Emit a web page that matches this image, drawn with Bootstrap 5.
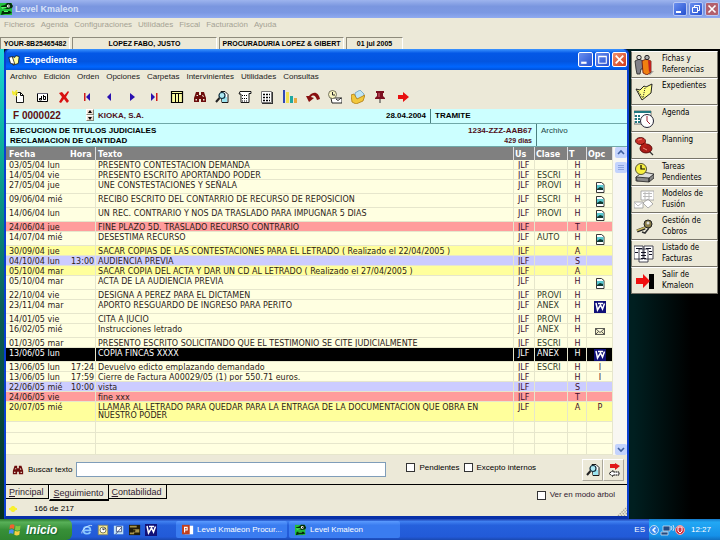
<!DOCTYPE html>
<html lang="es">
<head>
<meta charset="utf-8">
<meta name="viewport" content="width=device-width, initial-scale=1">
<title>Level Kmaleon</title>
<link href="https://cdn.jsdelivr.net/npm/bootstrap@5.3.0/dist/css/bootstrap.min.css" rel="stylesheet">
<style>
body{font:8px/10px "Liberation Sans",Arial,sans-serif;color:#000;background:#000;overflow:hidden}
button,input{font:inherit;color:inherit;padding:0;border:0;background:none}
a{color:inherit;text-decoration:none}
svg{display:block;flex:none}
.i14{width:14px;height:14px}.i12{width:12px;height:12px}.i20{width:20px;height:20px}
.face{background:#ece9d8}
.titlebar{font-size:9px;font-weight:700;line-height:12px}
.outer-title{height:18px;background:linear-gradient(#9db4ee,#7a96df 35%,#7b98e3 70%,#90abf0);color:#d8e2f8;padding:0 1px 0 0;gap:1px}
.winbtns{gap:2px}
.winbtns button{width:14px;height:14px;border:1px solid #b9c8f4;border-radius:2px;background:linear-gradient(135deg,#6a8ff0,#2450cf)}
.winbtns button svg{width:12px;height:12px}
.winbtns .x-out{background:#b3606c}
.winbtns .x-in{background:linear-gradient(135deg,#f09070,#d03a18);border-color:#fff}
.inner-title .winbtns button{border-color:#fff;height:15px;width:15px}
.inner-title .winbtns button svg{width:13px;height:13px}
.outer-menu{height:19px;gap:6px;padding:2px 4px;color:#a5a294}
.fields{height:12px;gap:2px}
.fields div{border:1px solid #8e8b7c;border-right-color:#fff;border-bottom:0;font-size:7px;font-weight:700;line-height:11px;text-align:center;white-space:nowrap;overflow:hidden}
.f1{width:70px}.f2{width:145px}.f3{width:125px}.f4{width:57px}
.desk{background:linear-gradient(90deg,#001f20 88%,#000 96%)}
.strip{flex:none;width:4px;background:linear-gradient(#1fd8d8,#0bb09c 20%,#0a6058 55%,#05301c)}
.win{border:solid #0a3fd0;border-width:0 2px 3px;border-bottom-color:#0830a8;border-radius:5px 5px 0 0;background:#0a3fd0;min-width:0}
.inner-title{height:21px;color:#fff;background:linear-gradient(#3d95ff,#0458e6 20%,#0355e0 60%,#0066ff 85%,#0050d8);border-radius:5px 5px 0 0;padding:0 0 0 2px}
.inner-menu{gap:7px;padding:2px 4px 0;height:14px;color:#222}
.tools{width:410px;height:25px;padding:0 6px}
.cyan{background:#ccffff}
.info1{height:15px;font-weight:700;line-height:14px;border-bottom:1px solid #70a8a8}
.info2{height:23px;font-weight:700;line-height:10px;border-bottom:1px solid #70a8a8}
.info2 > div{padding-top:2px}
.code{width:80px;font-size:10px;color:#601010;padding-left:7px}
.spin{width:8px;height:12px}
.spin button{height:6px;border:1px solid;border-color:#fff #887 #887 #fff;background:#ece0d4;width:8px}
.spin svg{width:6px;height:4px}
.trm{width:197px;border-left:1px solid #4a8080;padding-left:4px}
.arc{width:91px;flex:none;border-left:1px solid #4a8080;padding-left:4px;font-weight:400;color:#244}
.maroon{color:#501020}
.small7{font-size:7px}
.gridbox{background:#ffffe1}
.log{table-layout:fixed;width:100%;border-collapse:separate;border-spacing:0;font:8px/10px "DejaVu Sans",Verdana,sans-serif;color:#2c1c18}
.log th{height:13px;background:#808080;color:#fff;font-weight:700;padding:1px 1px 0;line-height:11px;border-right:1px solid #dcdcdc;overflow:hidden}
.log th:first-child,.log td:first-child{border-right:0;padding-left:3px}
.log td{height:10px;padding:2px 1px 0 2px;line-height:7px;border:solid #e6e6cc;border-width:0 1px 1px 0;vertical-align:top;white-space:nowrap;overflow:hidden}
.log th:nth-child(3),.log td:nth-child(3){padding-left:2px}
.log td:nth-child(n+4){color:#401030}
.log td:nth-child(5){color:#303a28}
.log td:nth-child(4){padding-left:4px}
.log td:nth-child(6){text-align:center}
.log td:nth-child(7){text-align:center}
.log td svg{margin:-1px auto 0}
.log .tall td{height:14px}
.log .dbl td{height:20px;line-height:8px}
.log .blank td{height:11px}
.log .pink td{background:#ff9c9c}
.log .yel td{background:#ffff9c}
.log .lil td{background:#ccccff}
.log .sel td{background:#000;color:#fff}
.sbar{width:14px;background:#f8f7f2}
.sbar button{width:12px;height:11px;margin-left:2px;background:#c3d3fd;border-radius:2px}
.sbar svg{width:12px;height:11px}
.find{height:30px;padding:0 3px 0 6px;border-bottom:1px solid #000}
.find .field{height:15px;width:310px;background:#fff;border:1px solid #7f9db9;border-radius:0}
.box{appearance:none;width:9px;height:9px;background:#fff;border:1px solid #333;margin:0}
.sq{width:21px;height:22px;border:1px solid;border-color:#fff #aaa79a #aaa79a #fff}
.tabs{font-size:9px;line-height:12px;color:#302030}
.tabs button{border:solid #000;border-width:0 1px 1px 0;padding:0 4px 0 3px;height:14px}
.tabs .on{height:16px;border-bottom-width:2px;border-left:1px solid #fff;padding:1px 4px 0}
.tabs button::first-letter{text-decoration:underline}
.tree{font-size:8px}
.stat{height:15px;padding-left:2px}
.side{flex:none;width:91px;padding:2px 2px 0 2px}
.side a{height:27px;border:1px solid #77746a;border-top-color:#fff;padding:1px 0 0 2px;gap:8px;font:8px/11px "DejaVu Sans Condensed","DejaVu Sans",sans-serif}
.side svg{margin-top:2px}
.task{height:21px;background:linear-gradient(#1c3fae,#3f80f0 12%,#2560dc 30%,#225ad8 85%,#1a48b0);color:#fff}
.start{width:72px;background:linear-gradient(#2a7a2a,#58b058 15%,#389038 50%,#2f8530);border-radius:0 6px 6px 0;font:italic 700 12px/18px "Liberation Sans",Arial,sans-serif;gap:4px;padding-left:8px;color:#fff;text-shadow:1px 1px 1px #163}
.quick{width:104px;padding-left:9px;gap:4px}
.tk{width:111px;height:17px;background:linear-gradient(#5b9bff,#3a7cf0 25%,#3a7cf0);border-radius:2px;padding-left:6px;gap:3px;white-space:nowrap}
.tk + .tk{margin-left:2px}
.tray{background:linear-gradient(#1578c8,#22a8f4 15%,#1590e8 80%,#1170c0);width:71px;padding-right:9px}
</style>
<script src="https://cdn.jsdelivr.net/npm/bootstrap@5.3.0/dist/js/bootstrap.bundle.min.js"></script>
</head>
<body class="d-flex flex-column vh-100">
<svg width="0" height="0" class="position-absolute" aria-hidden="true">
<symbol id="kam" viewBox="0 0 14 14"><path fill="#22c03c" d="M0 1h12v12H0z"/><path fill="#062c0a" d="M1 4l4-1 2-2h4l2 3-1 2-4 1-6 0zM2 9h8l2 2-3 1H5l-4 1z"/><path fill="#55ff66" d="M1 5h5l1 1-5 1zM4 9h4v1H4z"/><circle cx="8.500" cy="4" r="1.600" fill="#fff"/><circle cx="9" cy="4" r=".7"/></symbol>
<symbol id="min" viewBox="0 0 12 12"><path fill="#fff" d="M2 8h5v2H2z"/></symbol>
<symbol id="max" viewBox="0 0 12 12"><path fill="none" stroke="#fff" d="M2.500 3.500h7v6h-7zM2 3h8"/></symbol>
<symbol id="res" viewBox="0 0 12 12"><path fill="none" stroke="#fff" d="M4.500 4V2.500h5v5H8M2.500 4.500h5v5h-5z"/></symbol>
<symbol id="cls" viewBox="0 0 12 12"><path stroke="#fff" stroke-width="1.600" d="M2.500 2.500l7 7M9.500 2.500l-7 7"/></symbol>
<symbol id="up" viewBox="0 0 12 11"><path fill="none" stroke="#3f5f9f" stroke-width="1.600" d="M3 7l3-3 3 3"/></symbol>
<symbol id="dn" viewBox="0 0 12 11"><path fill="none" stroke="#3f5f9f" stroke-width="1.600" d="M3 4l3 3 3-3"/></symbol>
<symbol id="card" viewBox="0 0 14 14"><path fill="#ffff9c" stroke="#000" stroke-width=".8" d="M5 3l3 1 1-2 4 1-1 8-6 2z"/><path fill="#fff" stroke="#000" stroke-width=".8" d="M1 4l4-1 3 9-5-1z"/></symbol>
<symbol id="new" viewBox="0 0 14 14"><path fill="#fff" stroke="#000" stroke-width=".9" d="M4.500 2.500h4l3 3v7h-7z"/><path fill="none" stroke="#000" d="M8.500 2.500v3h3"/><path stroke="#f4ec30" stroke-width="1.500" d="M0 1l5 5M5 0L1 5M0 3h6"/></symbol>
<symbol id="edt" viewBox="0 0 14 14"><path fill="#fff" stroke="#000" d="M2.500 3.500h10v8h-10z"/><path fill="#667" d="M2 3h11v1H2z"/><path fill="none" stroke="#000" d="M6.500 6v4H4.500V8.500h2M8.500 5v4.500h2v-3h-2"/></symbol>
<symbol id="del" viewBox="0 0 14 14"><path fill="#d81010" d="M2 3l3-1 2.500 3L11 1l1 1-3 5 3 4-2 2-3-4-3 4-2-1 3-5z"/></symbol>
<symbol id="fst" viewBox="0 0 14 14"><path fill="#d01818" d="M4 3h1.500v8H4z"/><path fill="#2a10b0" d="M10 3v8L6 7z"/></symbol>
<symbol id="prv" viewBox="0 0 14 14"><path fill="#2a10b0" d="M9 3v8L5 7z"/></symbol>
<symbol id="nxt" viewBox="0 0 14 14"><path fill="#2a10b0" d="M5 3v8l5-4z"/></symbol>
<symbol id="lst" viewBox="0 0 14 14"><path fill="#2a10b0" d="M4 3v8l4-4z"/><path fill="#d01818" d="M9 3h1.500v8H9z"/></symbol>
<symbol id="col" viewBox="0 0 14 14"><path fill="#f8f8a0" stroke="#000" stroke-width="1.200" d="M1.500 1.500h11v11h-11z"/><path stroke="#000" d="M2 3.500h10M5.500 3v9M8.500 3v9"/></symbol>
<symbol id="bin" viewBox="0 0 14 14"><path fill="#6c0c0c" d="M3 2h3v3h2V2h3l2 6v4H8V9H6v3H1V8z"/><path fill="#ece9d8" d="M4 5h1v1H3zM9 5h1l1 2h-1zM2.500 9H4v1.500H2.500zM10 9h1.500v1.500H10z"/></symbol>
<symbol id="mag" viewBox="0 0 14 14"><path fill="#fff" stroke="#000" stroke-width=".9" d="M6 1.500h4l3 3v8H7z"/><path fill="#9be4f0" d="M7 7h5v5H7z"/><circle cx="7" cy="5.500" r="3" fill="#aeeaf4" stroke="#103040" stroke-width="1.200"/><path stroke="#222" stroke-width="2" d="M4.500 8L1 12"/></symbol>
<symbol id="scr" viewBox="0 0 14 14"><path fill="#fff" stroke="#000" stroke-width=".9" d="M2 1.500h11v2h-2v9H3V4H1z"/><path stroke="#000" stroke-dasharray="1 1" d="M4 5.500h6M4 8.500h6M4 11h5"/></symbol>
<symbol id="cal" viewBox="0 0 14 14"><path fill="#fff" stroke="#777" d="M1.500 1.500h10v11h-10z"/><path fill="#333" d="M12 2h1v12H2v-1h10z"/><path stroke="#000" stroke-width="1.500" stroke-dasharray="2 1" d="M3 4.500h7M3 7.500h7M3 10.500h7"/></symbol>
<symbol id="bar" viewBox="0 0 14 14"><path fill="#3048b8" d="M0 0h2v13H0z"/><path fill="#f0e050" d="M3 2h3v11H3z"/><path fill="#20a8a0" d="M7 6h3v7H7z"/><path fill="#e8a840" d="M11 8h3v5h-3z"/></symbol>
<symbol id="und" viewBox="0 0 14 14"><path fill="#881010" d="M0 6l3 6 5-4-3-1c2-3 5-1 6 3l3-1C13 3 8 0 3 6z"/></symbol>
<symbol id="clk" viewBox="0 0 14 14"><path fill="#fff" stroke="#111" stroke-width=".9" d="M3 8h11v5H4z"/><circle cx="4.500" cy="4.500" r="4" fill="#f8f4c0" stroke="#554" stroke-width=".8"/><path fill="none" stroke="#222" d="M4.500 2v3h2.500M8 9l2 1.500L13 8"/></symbol>
<symbol id="fol" viewBox="0 0 14 14"><path fill="#bfe4f4" stroke="#6aa0c0" stroke-width=".8" d="M4 3l5-3 4 4-2 6-6-1z"/><path fill="#f2c83c" stroke="#b07c10" stroke-width=".8" d="M0 5l3-1 3 5 8-4-2 6-7 3-4-2z"/></symbol>
<symbol id="pin" viewBox="0 0 14 14"><path fill="#7c1020" d="M3 1h8v2h-1v3l2 2v1H2V8l2-2V3H3z"/><path fill="#333" d="M6.500 9h1v4h-1z"/><path fill="#d86878" d="M5.500 3h1v4h-1z"/></symbol>
<symbol id="arr" viewBox="0 0 14 14"><path fill="#e81010" d="M2 5h5V2l6 5-6 5V9H2z"/></symbol>
<symbol id="img" viewBox="0 0 12 12"><path fill="#fff" stroke="#222" stroke-width=".9" d="M2.500 1.500h5l2.500 2v8H2.500z"/><path fill="#58c8d0" d="M3 4h6.500v5H3z"/><path fill="#103830" d="M3 8l3-2 3 1v2H3z"/></symbol>
<symbol id="wrd" viewBox="0 0 12 12"><path fill="#101078" d="M0 0h12v12H0z"/><path fill="none" stroke="#fff" stroke-width="1.500" d="M2 2l1.500 7 3-5 2 4 2-5.500M4 2.500h5"/></symbol>
<symbol id="env" viewBox="0 0 12 12"><path fill="#f0edc8" stroke="#333" stroke-width=".8" d="M1.500 3.500h9v6h-9zM1.500 3.500l4.500 4 4.500-4M1.500 9.500l3-3M10.500 9.500l-3-3"/></symbol>
<symbol id="swp" viewBox="0 0 14 14"><path fill="#e01818" d="M3 1h5V0l5 3-5 4V5H3z"/><path fill="#fff" stroke="#000" stroke-dasharray="1.500 .5" d="M12 9H6V7.500L2 10.500l4 3V12h6z"/></symbol>
<symbol id="ppl" viewBox="0 0 20 20"><path fill="#999" d="M12 17l8-1-4 4z"/><path fill="#808088" stroke="#222" stroke-width=".8" d="M1 6l4-2 4 2v8H7l-1 5H3l-1-5z"/><path fill="#f08010" stroke="#611" stroke-width=".8" d="M8 6l4-2 5 2v11l-4 3-4-2z"/><path fill="#c02020" d="M14 5l3 2v9l-2 1z"/><circle cx="5" cy="2.500" r="2.200" fill="#ddd" stroke="#222"/><circle cx="13" cy="2.500" r="2.200" fill="#aaa" stroke="#222"/></symbol>
<symbol id="exp" viewBox="0 0 20 20"><path fill="#ffff88" stroke="#222" d="M2 7l4 1 4-4 2 1 6-3-1 9-9 7z"/><path fill="none" stroke="#222" stroke-dasharray="1 1" d="M4 9l5 7M6 8l3-3M11 6l-2 10"/></symbol>
<symbol id="agd" viewBox="0 0 20 20"><path fill="#fff" stroke="#555" stroke-width=".8" d="M0 2h17v13H0z"/><path fill="#207880" d="M0 2h17v2H0zM1 6h5v8H1z"/><path stroke="#fff" d="M0 8.500h8M0 11.500h8M3.500 5v9"/><circle cx="13" cy="12" r="6.500" fill="#fff" stroke="#223"/><path fill="none" stroke="#a02030" d="M13 7v5l3 3"/></symbol>
<symbol id="pnl" viewBox="0 0 20 20"><path stroke="#333" stroke-width="1.300" d="M13 13l6 6"/><ellipse cx="12" cy="12.500" rx="6" ry="4.500" fill="#a81c18" stroke="#400" stroke-width=".8"/><path fill="#b82018" d="M6 6l5-1 2 5-5 3z"/><ellipse cx="6.500" cy="5" rx="5" ry="3.500" fill="#c83028" stroke="#400" stroke-width=".8"/><path fill="none" stroke="#f08878" d="M4 4l4-1M9 12l4 2"/></symbol>
<symbol id="tsk" viewBox="0 0 20 20"><path fill="#ddd" stroke="#222" stroke-width=".8" d="M2 14l7-5 11 2-5 6-13 1z"/><path fill="#888" stroke="#222" stroke-width=".8" d="M2 14l13 1v4L3 18zM15 15l5-4v4l-5 4z"/><circle cx="7" cy="6" r="5.500" fill="#f8f040" stroke="#553"/><path fill="none" stroke="#000" stroke-width="1.200" d="M7 2v4h4"/></symbol>
<symbol id="mod" viewBox="0 0 20 20"><path fill="#fff" stroke="#999" stroke-width=".8" d="M7 1h13v9H7zM0 12h9v6H0zM9 13l5-4 5 5-5 4z"/><path fill="none" stroke="#bbb" d="M9 3.500h9M9 6.500h9M0 12l4 4 5-4M11 2v8M15 2v8"/></symbol>
<symbol id="cob" viewBox="0 0 20 20"><circle cx="14" cy="7" r="4" fill="#887c48" stroke="#222"/><circle cx="14" cy="6" r="1.500" fill="#ddd"/><path fill="none" stroke="#333" stroke-width="1.500" d="M15 11l-4 5-3-1"/><path stroke="#222" stroke-width="3" d="M3 14l8-3"/><path stroke="#c8b860" stroke-width="1.500" d="M3 13.500l8-3"/></symbol>
<symbol id="lis" viewBox="0 0 20 20"><path fill="#fff" stroke="#334" stroke-width=".9" d="M10 2h9v13h-9zM0 2h9v13H0zM5 5h9v13H5z"/><path stroke="#112" d="M7 8.500h5M7 11.500h5M7 14.500h5M2 4.500h6M12 4.500h5M15 7.500h3M15 10.500h3M1 8.500h3"/></symbol>
<symbol id="sal" viewBox="0 0 20 20"><path fill="#000" d="M15 3h5v15h-5z"/><path fill="#f01010" d="M2 7h7V3l7 7-7 7v-4H2z"/></symbol>
<symbol id="win" viewBox="0 0 14 14"><path fill="#f06030" d="M2 2c2-1 3-1 4.500 0L6 6c-2-1-3-1-4.500 0z"/><path fill="#80c840" d="M7.500 2.500c2 1 3 1 5 0L12 7c-2 1-3 1-5 0z"/><path fill="#4890f0" d="M1.300 7c2-1 3-1 4.500 0l-.5 4c-2-1-3-1-4.500 0z"/><path fill="#f8d040" d="M6.800 7.800c2 1 3 1 5 0l-.5 4c-2 1-3 1-5 0z"/></symbol>
<symbol id="ie" viewBox="0 0 14 14"><path fill="none" stroke="#8cc8ff" stroke-width="2" d="M3 7.500h8C11 2 3 2 3 7.500c0 5 6 4.500 8 2"/><path fill="none" stroke="#cfe4ff" d="M1 11C0 7 9 0 13 2"/></symbol>
<symbol id="out" viewBox="0 0 14 14"><path fill="#f4e890" stroke="#886" d="M1.500 1.500h11v11h-11z"/><circle cx="7" cy="7" r="3.500" fill="#fff" stroke="#664"/><path fill="none" stroke="#222" d="M7 4.500V7l3-2"/></symbol>
<symbol id="dsk" viewBox="0 0 14 14"><path fill="#bfe0f8" d="M1 2h11v10H1z"/><path fill="#fff" stroke="#347" stroke-width=".9" d="M4 3h6v6H4z"/><path stroke="#347" d="M3 12l7-8"/></symbol>
<symbol id="brn" viewBox="0 0 14 14"><path fill="#221c08" d="M0 1h13v12H0z"/><path fill="#a8944c" d="M1 2h8v2H1zM5 6h7v4H5zM1 10h5v2H1z"/><circle cx="6" cy="8" r="1.500" fill="#32280c"/></symbol>
<symbol id="ppt" viewBox="0 0 14 14"><path fill="#fff" d="M3 2h10v10H3z"/><path fill="#c04020" d="M0 1h9v11H0z"/><path fill="none" stroke="#fff" stroke-width="1.300" d="M3 10V4h3v3H3"/></symbol>
</svg>

<header>
<div class="outer-title titlebar d-flex align-items-center">
<svg class="i14"><use href="#kam"/></svg><span class="flex-grow-1">Level Kmaleon</span>
<div class="winbtns d-flex"><button aria-label="Minimizar"><svg><use href="#min"/></svg></button><button aria-label="Restaurar"><svg><use href="#res"/></svg></button><button class="x-out" aria-label="Cerrar"><svg><use href="#cls"/></svg></button></div>
</div>
<nav class="face outer-menu d-flex"><a href="#">Ficheros</a><a href="#">Agenda</a><a href="#">Configuraciones</a><a href="#">Utilidades</a><a href="#">Fiscal</a><a href="#">Facturación</a><a href="#">Ayuda</a></nav>
<div class="face fields d-flex"><div class="f1">YOUR-8B25465482</div><div class="f2">LOPEZ FABO, JUSTO</div><div class="f3">PROCURADURIA LOPEZ &amp; GIBERT</div><div class="f4">01 jul 2005</div></div>
</header>

<main class="desk d-flex flex-grow-1">
<div class="strip"></div>
<section class="win d-flex flex-column flex-grow-1 mb-0">
<div class="inner-title titlebar d-flex align-items-center"><svg class="i12"><use href="#card"/></svg><span class="flex-grow-1 ps-1">Expedientes</span>
<div class="winbtns d-flex"><button aria-label="Minimizar"><svg><use href="#min"/></svg></button><button aria-label="Maximizar"><svg><use href="#max"/></svg></button><button class="x-in" aria-label="Cerrar"><svg><use href="#cls"/></svg></button></div></div>
<nav class="face inner-menu d-flex"><a href="#">Archivo</a><a href="#">Edición</a><a href="#">Orden</a><a href="#">Opciones</a><a href="#">Carpetas</a><a href="#">Intervinientes</a><a href="#">Utilidades</a><a href="#">Consultas</a></nav>
<div class="face">
<div class="tools d-flex justify-content-between align-items-center">
<button aria-label="Nuevo"><svg class="i14"><use href="#new"/></svg></button><button aria-label="Editar"><svg class="i14"><use href="#edt"/></svg></button><button aria-label="Borrar"><svg class="i14"><use href="#del"/></svg></button><button aria-label="Primero"><svg class="i14"><use href="#fst"/></svg></button><button aria-label="Anterior"><svg class="i14"><use href="#prv"/></svg></button><button aria-label="Siguiente"><svg class="i14"><use href="#nxt"/></svg></button><button aria-label="Último"><svg class="i14"><use href="#lst"/></svg></button><button aria-label="Columnas"><svg class="i14"><use href="#col"/></svg></button><button aria-label="Buscar"><svg class="i14"><use href="#bin"/></svg></button><button aria-label="Vista previa"><svg class="i14"><use href="#mag"/></svg></button><button aria-label="Informe"><svg class="i14"><use href="#scr"/></svg></button><button aria-label="Calculadora"><svg class="i14"><use href="#cal"/></svg></button><button aria-label="Gráfico"><svg class="i14"><use href="#bar"/></svg></button><button aria-label="Deshacer"><svg class="i14"><use href="#und"/></svg></button><button aria-label="Plazos"><svg class="i14"><use href="#clk"/></svg></button><button aria-label="Carpeta"><svg class="i14"><use href="#fol"/></svg></button><button aria-label="Fijar"><svg class="i14"><use href="#pin"/></svg></button><button aria-label="Salir"><svg class="i14"><use href="#arr"/></svg></button>
</div></div>
<div class="cyan info1 d-flex align-items-stretch">
<span class="code">F 0000022</span>
<span class="spin d-flex flex-column"><button aria-label="Subir"><svg viewBox="0 0 6 4"><path d="M3 0l2 3H1z"/></svg></button><button aria-label="Bajar"><svg viewBox="0 0 6 4"><path d="M1 1h4L3 4z"/></svg></button></span>
<span class="ps-1 flex-grow-1 maroon">KIOKA, S.A.</span><span class="pe-1">28.04.2004</span><span class="trm">TRAMITE</span>
</div>
<div class="cyan info2 d-flex">
<div class="ps-1 flex-grow-1"><div>EJECUCION DE TITULOS JUDICIALES</div><div>RECLAMACION DE CANTIDAD</div></div>
<div class="text-end pe-1 maroon"><div>1234-ZZZ-AAB67</div><div class="small7">429 dias</div></div>
<div class="arc">Archivo</div>
</div>
<div class="gridbox d-flex">
<div class="flex-grow-1">
<table class="log">
<colgroup><col style="width:63px"><col style="width:27px"><col><col style="width:21px"><col style="width:33px"><col style="width:19px"><col style="width:26px"></colgroup>
<thead><tr><th>Fecha</th><th>Hora</th><th>Texto</th><th>Us</th><th>Clase</th><th>T</th><th>Opc</th></tr></thead>
<tbody>
<tr><td>03/05/04 lun</td><td></td><td>PRESENTO CONTESTACION DEMANDA</td><td>JLF</td><td></td><td>H</td><td></td></tr>
<tr><td>14/05/04 vie</td><td></td><td>PRESENTO ESCRITO APORTANDO PODER</td><td>JLF</td><td>ESCRI</td><td>H</td><td></td></tr>
<tr class="tall"><td>27/05/04 jue</td><td></td><td>UNE CONSTESTACIONES Y SEÑALA</td><td>JLF</td><td>PROVI</td><td>H</td><td><svg class="i12"><use href="#img"/></svg></td></tr>
<tr class="tall"><td>09/06/04 mié</td><td></td><td>RECIBO ESCRITO DEL CONTARRIO DE RECURSO DE REPOSICION</td><td>JLF</td><td>ESCRI</td><td>H</td><td><svg class="i12"><use href="#img"/></svg></td></tr>
<tr class="tall"><td>14/06/04 lun</td><td></td><td>UN REC. CONTRARIO Y NOS DA TRASLADO PARA IMPUGNAR 5 DIAS</td><td>JLF</td><td>PROVI</td><td>H</td><td><svg class="i12"><use href="#img"/></svg></td></tr>
<tr class="pink"><td>24/06/04 jue</td><td></td><td>FINE PLAZO 5D. TRASLADO RECURSO CONTRARIO</td><td>JLF</td><td></td><td>T</td><td></td></tr>
<tr class="tall"><td>14/07/04 mié</td><td></td><td>DESESTIMA RECURSO</td><td>JLF</td><td>AUTO</td><td>H</td><td><svg class="i12"><use href="#img"/></svg></td></tr>
<tr class="yel"><td>30/09/04 jue</td><td></td><td>SACAR COPIAS DE LAS CONTESTACIONES PARA EL LETRADO ( Realizado el 22/04/2005 )</td><td>JLF</td><td></td><td>A</td><td></td></tr>
<tr class="lil"><td>04/10/04 lun</td><td>13:00</td><td>AUDIENCIA PREVIA</td><td>JLF</td><td></td><td>S</td><td></td></tr>
<tr class="yel"><td>05/10/04 mar</td><td></td><td>SACAR COPIA DEL ACTA Y DAR UN CD AL LETRADO ( Realizado el 27/04/2005 )</td><td>JLF</td><td></td><td>A</td><td></td></tr>
<tr class="tall"><td>05/10/04 mar</td><td></td><td>ACTA DE LA AUDIENCIA PREVIA</td><td>JLF</td><td></td><td>H</td><td><svg class="i12"><use href="#img"/></svg></td></tr>
<tr><td>22/10/04 vie</td><td></td><td>DESIGNA A PEREZ PARA EL DICTAMEN</td><td>JLF</td><td>PROVI</td><td>H</td><td></td></tr>
<tr class="tall"><td>23/11/04 mar</td><td></td><td>APORTO RESGUARDO DE INGRESO PARA PERITO</td><td>JLF</td><td>ANEX</td><td>H</td><td><svg class="i12"><use href="#wrd"/></svg></td></tr>
<tr><td>14/01/05 vie</td><td></td><td>CITA A JUCIO</td><td>JLF</td><td>PROVI</td><td>H</td><td></td></tr>
<tr class="tall"><td>16/02/05 mié</td><td></td><td>Instrucciones letrado</td><td>JLF</td><td>ANEX</td><td>H</td><td><svg class="i12"><use href="#env"/></svg></td></tr>
<tr><td>01/03/05 mar</td><td></td><td>PRESENTO ESCRITO SOLICITANDO QUE EL TESTIMONIO SE CITE JUDICIALMENTE</td><td>JLF</td><td>ESCRI</td><td>H</td><td></td></tr>
<tr class="tall sel"><td>13/06/05 lun</td><td></td><td>COPIA FINCAS XXXX</td><td>JLF</td><td>ANEX</td><td>H</td><td><svg class="i12"><use href="#wrd"/></svg></td></tr>
<tr><td>13/06/05 lun</td><td>17:24</td><td>Devuelvo edicto emplazando demandado</td><td>JLF</td><td>ESCRI</td><td>H</td><td>I</td></tr>
<tr><td>13/06/05 lun</td><td>17:59</td><td>Cierre de Factura A00029/05 (1) por 550.71 euros.</td><td>JLF</td><td></td><td>H</td><td>I</td></tr>
<tr class="lil"><td>22/06/05 mié</td><td>10:00</td><td>vista</td><td>JLF</td><td></td><td>S</td><td></td></tr>
<tr class="pink"><td>24/06/05 vie</td><td></td><td>fine xxx</td><td>JLF</td><td></td><td>T</td><td></td></tr>
<tr class="yel dbl"><td>20/07/05 mié</td><td></td><td>LLAMAR AL LETRADO PARA QUEDAR PARA LA ENTRAGA DE LA DOCUMENTACION QUE OBRA EN<br>NUESTRO PODER</td><td>JLF</td><td></td><td>A</td><td>P</td></tr>
<tr class="blank"><td></td><td></td><td></td><td></td><td></td><td></td><td></td></tr>
<tr class="blank"><td></td><td></td><td></td><td></td><td></td><td></td><td></td></tr>
<tr class="blank"><td></td><td></td><td></td><td></td><td></td><td></td><td></td></tr>
</tbody></table></div>
<div class="sbar d-flex flex-column"><button aria-label="Arriba"><svg><use href="#up"/></svg></button><button class="mt-1 mb-auto" aria-label="Posición"><svg viewBox="0 0 12 11"><path stroke="#8ca4e0" d="M3 3.500h6M3 5.500h6M3 7.500h6"/></svg></button><button aria-label="Abajo"><svg><use href="#dn"/></svg></button></div>
</div>
<div class="face find d-flex align-items-center">
<svg class="i12"><use href="#bin"/></svg><label for="q" class="px-1">Buscar texto</label><input id="q" class="field" type="text">
<span class="d-flex align-items-center flex-grow-1 ms-3 ps-1 pb-1"><input class="box" type="checkbox" id="c1"><label class="px-1" for="c1">Pendientes</label><input class="box" type="checkbox" id="c2"><label class="ps-1" for="c2">Excepto internos</label></span>
<button class="sq d-flex align-items-center justify-content-center" aria-label="Ver"><svg class="i14"><use href="#mag"/></svg></button><button class="sq d-flex align-items-center justify-content-center" aria-label="Cambiar"><svg class="i14"><use href="#swp"/></svg></button>
</div>
<div class="face tabs d-flex align-items-start"><button>Principal</button><button class="on">Seguimiento</button><button>Contabilidad</button>
<span class="tree ms-auto d-flex align-items-center pe-2 me-1 pt-1"><input class="box" type="checkbox" id="c3"><label class="ps-1" for="c3">Ver en modo árbol</label></span></div>
<div class="face stat d-flex align-items-center flex-grow-1"><svg width="10" height="10" viewBox="0 0 10 10"><path stroke="#f8f030" stroke-width="2" d="M1 5h8M5 2v6M3 3l4 4M7 3L3 7"/></svg><span class="ps-3 flex-grow-1">166 de 217</span><svg class="align-self-end" width="10" height="10" viewBox="0 0 10 10"><path stroke="#a5a294" stroke-dasharray="1.500 1" stroke-width="1.300" d="M1 10l9-9M4 10l6-6M7 10l3-3"/></svg></div>
</section>
<aside class="side">
<a href="#" class="face d-flex"><svg class="i20"><use href="#ppl"/></svg><span>Fichas y<br>Referencias</span></a>
<a href="#" class="face d-flex"><svg class="i20"><use href="#exp"/></svg><span>Expedientes</span></a>
<a href="#" class="face d-flex"><svg class="i20"><use href="#agd"/></svg><span>Agenda</span></a>
<a href="#" class="face d-flex"><svg class="i20"><use href="#pnl"/></svg><span>Planning</span></a>
<a href="#" class="face d-flex"><svg class="i20"><use href="#tsk"/></svg><span>Tareas<br>Pendientes</span></a>
<a href="#" class="face d-flex"><svg class="i20"><use href="#mod"/></svg><span>Modelos de<br>Fusión</span></a>
<a href="#" class="face d-flex"><svg class="i20"><use href="#cob"/></svg><span>Gestión de<br>Cobros</span></a>
<a href="#" class="face d-flex"><svg class="i20"><use href="#lis"/></svg><span>Listado de<br>Facturas</span></a>
<a href="#" class="face d-flex"><svg class="i20"><use href="#sal"/></svg><span>Salir de<br>Kmaleon</span></a>
</aside>
</main>

<footer class="task d-flex align-items-center">
<button class="start d-flex align-items-center h-100"><svg class="i14"><use href="#win"/></svg>Inicio</button>
<div class="quick d-flex"><svg class="i12"><use href="#ie"/></svg><svg class="i12"><use href="#out"/></svg><svg class="i12"><use href="#dsk"/></svg><svg class="i12"><use href="#brn"/></svg><svg class="i12"><use href="#wrd"/></svg></div>
<button class="tk d-flex align-items-center"><svg class="i12"><use href="#ppt"/></svg>Level Kmaleon Procur...</button>
<button class="tk d-flex align-items-center"><svg class="i12"><use href="#kam"/></svg>Level Kmaleon</button>
<span class="ms-auto pe-1">ES</span>
<div class="tray d-flex align-items-center h-100"><svg width="38" height="12" viewBox="0 0 38 12"><circle cx="5" cy="6" r="4.500" fill="#3c8cf0" stroke="#bde"/><path fill="none" stroke="#fff" stroke-width="1.500" d="M6.500 3.500L4 6l2.500 2.500"/><path fill="#234a80" stroke="#cde" stroke-width=".8" d="M14 2h7v5h-7zM12 8h7v3h-7z"/><path fill="none" stroke="#cde" d="M22 2q2 2 0 4M24 1q2 3 0 6"/><circle cx="31" cy="6" r="4.500" fill="#d03040" stroke="#eaa"/><path fill="none" stroke="#fff" d="M29 3v4l2 2 2-2V3z"/></svg><span class="ms-auto">12:27</span></div>
</footer>
</body>
</html>
